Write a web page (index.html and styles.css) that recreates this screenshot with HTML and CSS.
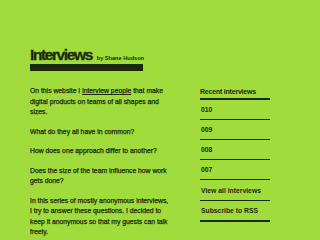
FILE: index.html
```
<!DOCTYPE html>
<html>
<head>
<meta charset="utf-8">
<link rel="stylesheet" href="styles.css">
</head>
<body>
<div class="page">
  <header class="masthead">
    <h1 class="title">Interviews <span class="byline">by Shane Hudson</span></h1>
    <div class="bar"></div>
  </header>
  <div class="columns">
    <main class="main">
      <p>On this website I <a href="#">interview people</a> that make digital products on teams of all shapes and sizes.</p>
      <p>What do they all have in common?</p>
      <p>How does one approach differ to another?</p>
      <p>Does the size of the team influence how work gets done?</p>
      <p>In this series of mostly anonymous interviews, I try to answer these questions. I decided to keep it anonymous so that my guests can talk freely.</p>
    </main>
    <aside class="side">
      <h2 class="side-title">Recent interviews</h2>
      <ul class="side-list">
        <li><a href="#">010</a></li>
        <li><a href="#">009</a></li>
        <li><a href="#">008</a></li>
        <li><a href="#">007</a></li>
        <li><a href="#">View all interviews</a></li>
        <li class="last"><a href="#">Subscribe to RSS</a></li>
      </ul>
    </aside>
  </div>
</div>
</body>
</html>
```
FILE: styles.css
```
html, body {
  margin: 0;
  padding: 0;
  background: #a1dc3d;
  color: #1b2a0b;
  font-family: "Liberation Sans", Arial, sans-serif;
  overflow: hidden;
}
.page {
  padding: 47px 30px 0 30px;
  width: 240px;
}
.masthead {
  width: 113px;
}
.title {
  margin: 0;
  font-size: 15.5px;
  line-height: 15px;
  font-weight: bold;
  letter-spacing: -0.09em;
  white-space: nowrap;
  -webkit-text-stroke: 0.3px currentColor;
}
.byline {
  font-size: 5.6px;
  line-height: 1;
  letter-spacing: 0;
  margin-left: 2px;
  -webkit-text-stroke: 0;
}
.bar {
  height: 7px;
  background: #1b2a0b;
  margin-top: 2px;
}
.columns {
  display: flex;
  gap: 28px;
  margin-top: 15px;
}
.main {
  width: 142px;
  font-size: 6.8px;
  line-height: 10.5px;
  -webkit-text-stroke: 0.25px currentColor;
}
.main p {
  margin: 0 0 9px 0;
}
.main a {
  color: inherit;
  text-decoration: underline;
}
.side {
  width: 70px;
  padding-top: 1px;
}
.side-title {
  margin: 0;
  font-size: 7px;
  line-height: 10px;
  font-weight: bold;
  letter-spacing: -0.03em;
  padding-bottom: 1px;
  border-bottom: 2px solid #1b2a0b;
}
.side-list {
  list-style: none;
  margin: 0;
  padding: 0;
}
.side-list li {
  border-bottom: 1px solid #1b2a0b;
  height: 19px;
  display: flex;
  align-items: center;
  padding-left: 1px;
}
.side-list li:nth-child(n+5) {
  height: 20px;
}
.side-list li.last {
  border-bottom-width: 2px;
  height: 19px;
}
.side-list a {
  color: inherit;
  text-decoration: none;
  font-size: 6.8px;
  font-weight: bold;
}
```
